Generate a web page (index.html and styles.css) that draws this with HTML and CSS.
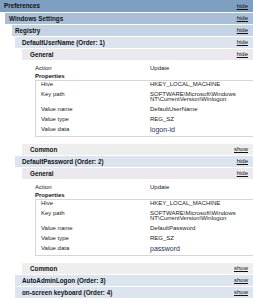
FILE: index.html
```html
<!DOCTYPE html>
<html lang="en">
<head>
  <meta charset="UTF-8">
  <title>Preferences</title>
  <link rel="stylesheet" href="styles.css">
</head>
<body>
  <div class="bar he0"><span>Preferences</span><a class="expando">hide</a></div>
  <div class="lvl1">
    <div class="bar he1"><span>Windows Settings</span><a class="expando">hide</a></div>
    <div class="lvl2">
      <div class="bar he2"><span>Registry</span><a class="expando">hide</a></div>
      <div class="lvl3">

        <!-- DefaultUserName -->
        <div class="bar he3"><span>DefaultUserName (Order: 1)</span><a class="expando">hide</a></div>
        <div class="lvl4">
          <div class="bar he4"><span>General</span><a class="expando">hide</a></div>
          <div class="content">
            <div class="info"><span class="lbl">Action</span><span>Update</span></div>
            <div class="subtitle">Properties</div>
            <div class="props">
              <div class="prow"><span>Hive</span><span>HKEY_LOCAL_MACHINE</span></div>
              <div class="prow"><span>Key path</span><span>SOFTWARE\Microsoft\Windows NT\CurrentVersion\Winlogon</span></div>
              <div class="prow"><span>Value name</span><span>DefaultUserName</span></div>
              <div class="prow"><span>Value type</span><span>REG_SZ</span></div>
              <div class="prow"><span>Value data</span><span class="data">logon-id</span></div>
            </div>
          </div>
          <div class="bar he4 common"><span>Common</span><a class="expando">show</a></div>
        </div>

        <!-- DefaultPassword -->
        <div class="bar he3"><span>DefaultPassword (Order: 2)</span><a class="expando">hide</a></div>
        <div class="lvl4">
          <div class="bar he4"><span>General</span><a class="expando">hide</a></div>
          <div class="content">
            <div class="info"><span class="lbl">Action</span><span>Update</span></div>
            <div class="subtitle">Properties</div>
            <div class="props">
              <div class="prow"><span>Hive</span><span>HKEY_LOCAL_MACHINE</span></div>
              <div class="prow"><span>Key path</span><span>SOFTWARE\Microsoft\Windows NT\CurrentVersion\Winlogon</span></div>
              <div class="prow"><span>Value name</span><span>DefaultPassword</span></div>
              <div class="prow"><span>Value type</span><span>REG_SZ</span></div>
              <div class="prow"><span>Value data</span><span class="data">password</span></div>
            </div>
          </div>
          <div class="bar he4 common"><span>Common</span><a class="expando">show</a></div>
        </div>

        <div class="bar he3"><span>AutoAdminLogon (Order: 3)</span><a class="expando">show</a></div>
        <div class="bar he3"><span>on-screen keyboard (Order: 4)</span><a class="expando">show</a></div>
      </div>
    </div>
  </div>
</body>
</html>
```

FILE: styles.css
```css
* { margin: 0; padding: 0; box-sizing: border-box; }
body {
  font-family: 'Liberation Sans', Arial, sans-serif;
  font-size: 6px;
  color: #222;
  background-color: #fff;
  overflow: hidden;
}

/* Section header bars */
.bar {
  display: flex;
  justify-content: space-between;
  height: 11px;
  line-height: 11px;
  margin-bottom: 1px;
  padding-right: 5px;
  font-size: 6.3px;
  font-weight: bold;
  color: #111;
  white-space: nowrap;
}
.expando {
  font-size: 6px;
  font-weight: normal;
  color: #111;
  text-decoration: underline;
}
.he0 { height: 12px; line-height: 12px; background-color: #7f9fc0; padding-left: 4px; }
.he1 { background-color: #a8bfd7; padding-left: 4px; }
.he2 { background-color: #c5d4e4; padding-left: 3px; }
.he3 { background-color: #dce4ef; padding-left: 7px; }
.he4 { background-color: #ece9ee; padding-left: 8px; }
.he4.common { background-color: #eeeeee; }

/* Nesting indents */
.lvl1 { margin-left: 5px; }
.lvl2 { margin-left: 7px; }
.lvl3 { margin-left: 3px; }
.lvl4 { margin-left: 7px; }

/* Section body */
.content { padding: 3px 0 7px 13px; }
.info { display: flex; line-height: 8px; }
.info .lbl { width: 115px; }
.subtitle { font-weight: bold; line-height: 8px; color: #111; }

.props { border: 1px solid #d6d6d6; border-right: none; }
.prow {
  display: grid;
  grid-template-columns: 114px 1fr;
  line-height: 5px;
  padding: 0.8px 0 4.2px;
}
.prow span:first-child { padding-left: 5px; }
.prow .data { font-size: 7px; color: #22305a; }
```
